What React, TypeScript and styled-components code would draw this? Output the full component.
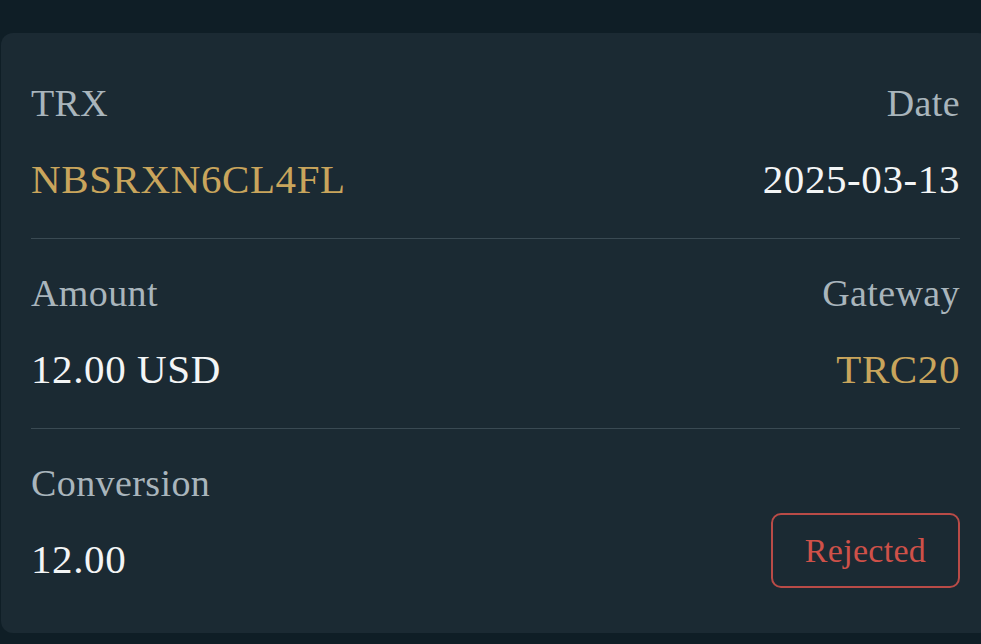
import React from "react";
import styled, { createGlobalStyle } from "styled-components";

const GlobalStyle = createGlobalStyle`
  html, body {
    margin: 0;
    padding: 0;
    background-color: #0f1e26;
    overflow: hidden;
  }
  body {
    font-family: "Liberation Serif", "DejaVu Serif", serif;
  }
`;

const Page = styled.div`
  width: 981px;
  height: 644px;
  padding-top: 33px;
  box-sizing: border-box;
`;

const Card = styled.div`
  margin-left: 1px;
  width: 989px;
  box-sizing: border-box;
  padding: 15.5px 30px;
  background-color: #1b2a33;
  border-radius: 12px;
`;

const Row = styled.div<{ $last?: boolean }>`
  display: flex;
  justify-content: space-between;
  align-items: flex-end;
  padding: 32px 0 34px;
  border-bottom: ${(p) => (p.$last ? "none" : "1px solid #3a4a53")};
`;

const Field = styled.div<{ $right?: boolean }>`
  display: flex;
  flex-direction: column;
  gap: 30px;
  align-items: ${(p) => (p.$right ? "flex-end" : "flex-start")};
`;

const Label = styled.span`
  font-size: 38px;
  line-height: 44px;
  letter-spacing: 0.4px;
  color: #a9b5bc;
`;

const Value = styled.span<{ $gold?: boolean }>`
  font-size: 41px;
  line-height: 49px;
  letter-spacing: 0.6px;
  color: ${(p) => (p.$gold ? "#c9a55c" : "#f3f5f6")};
`;

const StatusBadge = styled.div`
  width: 189px;
  height: 75px;
  box-sizing: border-box;
  margin-bottom: -4.5px;
  border: 2px solid #b94b47;
  border-radius: 10px;
  display: flex;
  align-items: center;
  justify-content: center;
  font-size: 34px;
  letter-spacing: 0.3px;
  color: #cf5149;
`;

export default function App() {
  return (
    <>
      <GlobalStyle />
      <Page>
        <Card>
          <Row>
            <Field>
              <Label>TRX</Label>
              <Value $gold>NBSRXN6CL4FL</Value>
            </Field>
            <Field $right>
              <Label>Date</Label>
              <Value>2025-03-13</Value>
            </Field>
          </Row>
          <Row>
            <Field>
              <Label>Amount</Label>
              <Value>12.00 USD</Value>
            </Field>
            <Field $right>
              <Label>Gateway</Label>
              <Value $gold>TRC20</Value>
            </Field>
          </Row>
          <Row $last>
            <Field>
              <Label>Conversion</Label>
              <Value>12.00</Value>
            </Field>
            <StatusBadge>Rejected</StatusBadge>
          </Row>
        </Card>
      </Page>
    </>
  );
}
